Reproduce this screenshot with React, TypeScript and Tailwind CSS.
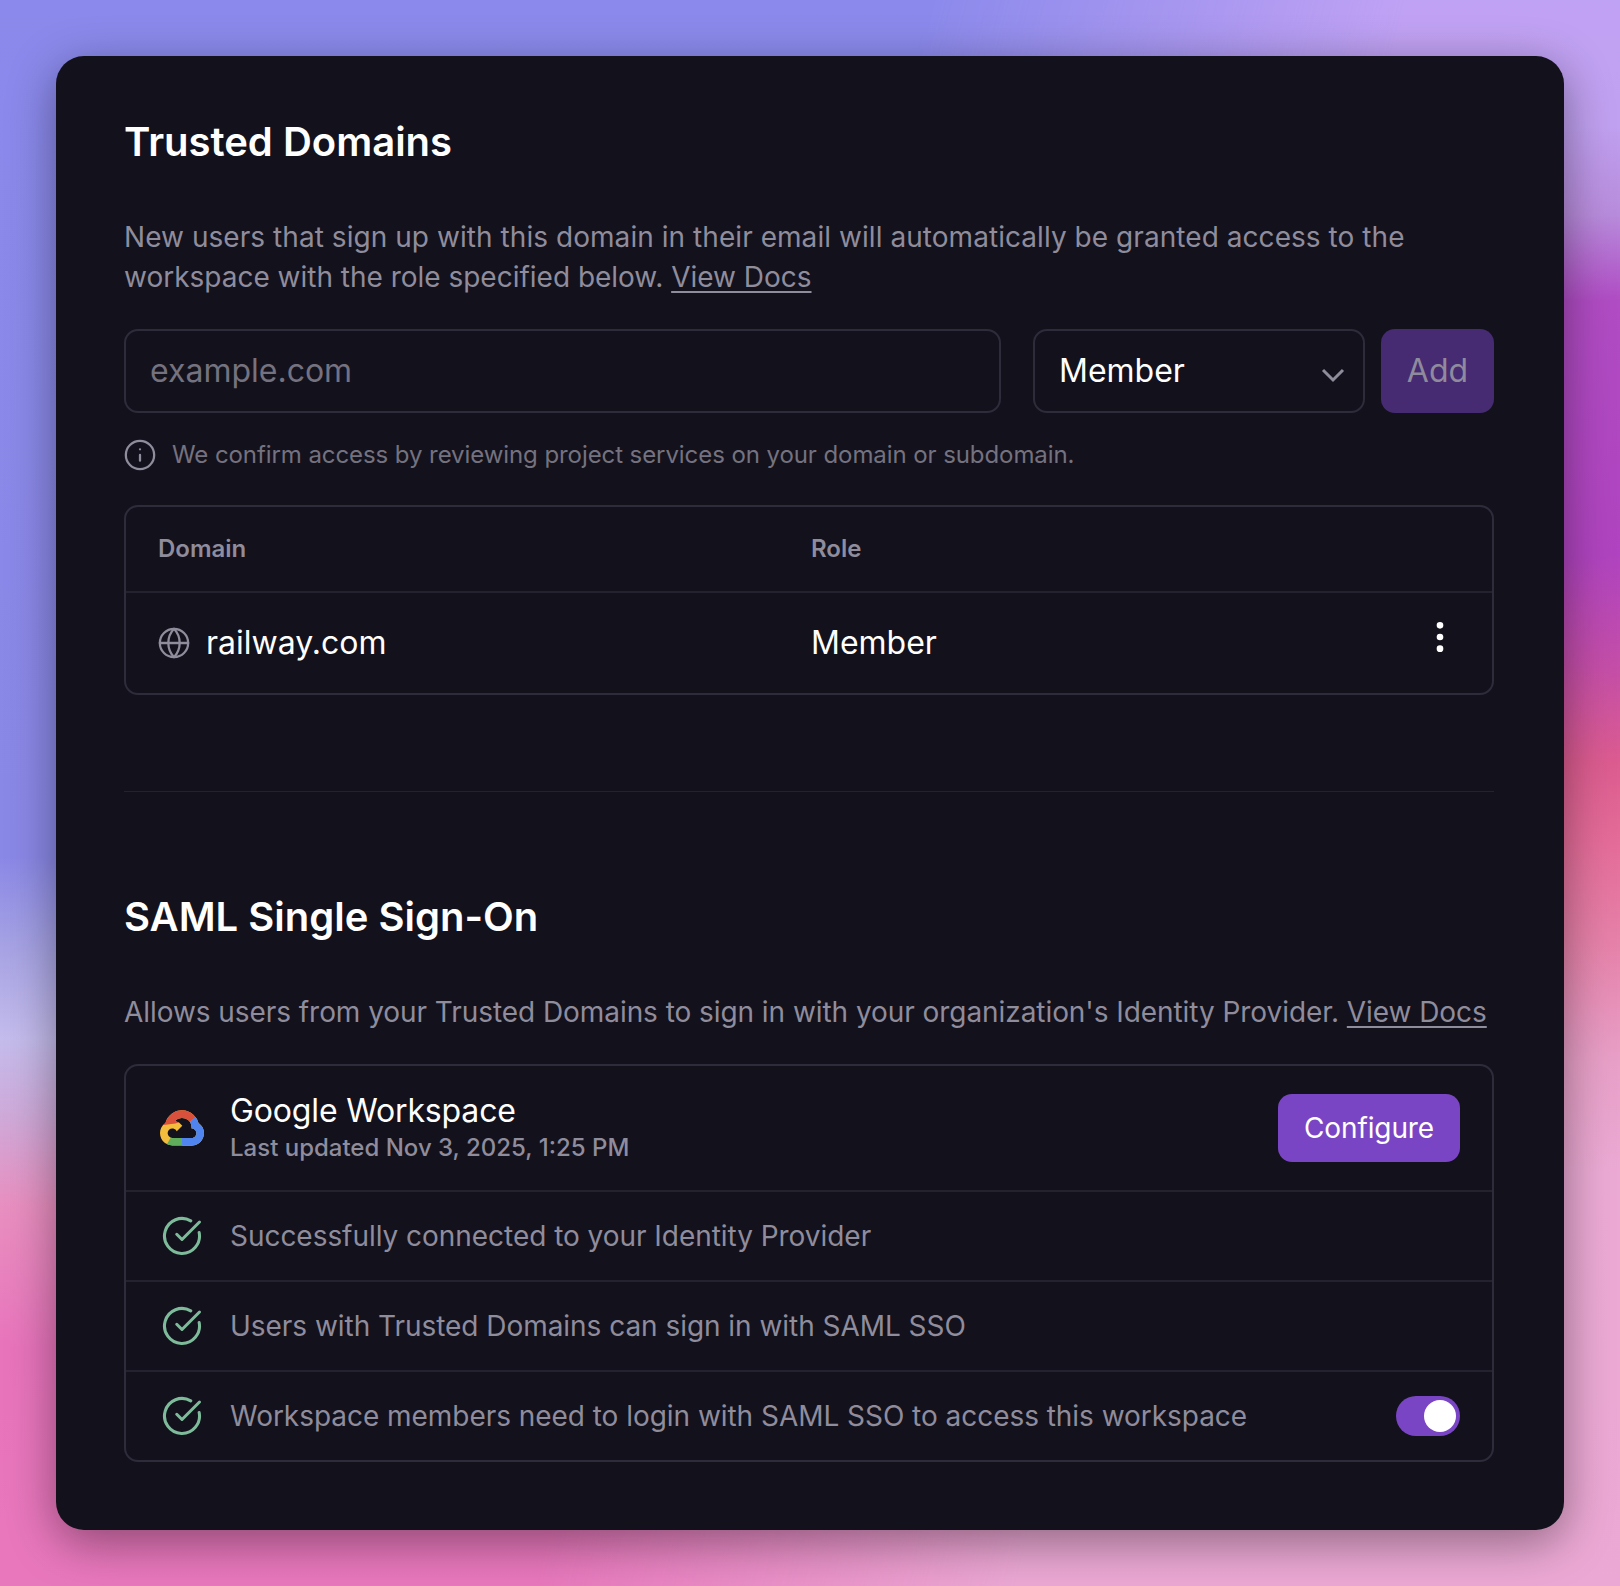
import { CircleCheckBig, EllipsisVertical, Globe, Info } from "lucide-react";

const checks = [
  "Successfully connected to your Identity Provider",
  "Users with Trusted Domains can sign in with SAML SSO",
  "Workspace members need to login with SAML SSO to access this workspace",
];

const GoogleCloud = () => (
  <svg width="44" height="44" viewBox="0 0 24 24" className="shrink-0">
    <defs>
      <clipPath id="cloud">
        <path
          clipRule="evenodd"
          d="M12.19 2.38a9.344 9.344 0 0 0-9.234 6.893c.053-.02-.055.013 0 0-3.875 2.551-3.922 8.11-.247 10.941l.006-.007-.007.03a6.717 6.717 0 0 0 4.077 1.356h5.173l.03.03h5.192c6.687.053 9.376-8.605 3.835-12.35a9.365 9.365 0 0 0-2.821-4.552l-.043.043.006-.05A9.344 9.344 0 0 0 12.19 2.38zm-.358 4.146c1.244-.04 2.518.368 3.486 1.15a5.186 5.186 0 0 1 1.862 4.078v.518c3.53-.07 3.53 5.262 0 5.193h-5.193l-.008.009v-.04H6.785a2.59 2.59 0 0 1-1.067-.23h.001a2.597 2.597 0 1 1 3.437-3.437l3.013-3.012A6.747 6.747 0 0 0 8.11 8.24c.018-.01.04-.026.054-.023a5.186 5.186 0 0 1 3.67-1.69z"
        />
      </clipPath>
    </defs>
    <g clipPath="url(#cloud)">
      <rect x="0" y="0" width="24" height="24" fill="#f2bd3c" />
      <polygon points="12,16 24,16 24,24 12,24" fill="#5085f0" />
      <polygon points="16,9 19.5,5 24,8 24,17 12,17 12,15 18,15" fill="#5085f0" />
      <polygon points="0,0 24,0 19.8,5.2 16,9 13,8 8.4,9.5 2,10.4" fill="#d9503c" />
      <polygon points="5.6,17.6 12,17.2 12.05,24 2,24" fill="#5fad5c" />
    </g>
  </svg>
);

export default function App() {
  return (
    <div className="relative min-h-[1586px] p-[56px] font-['Inter',sans-serif] bg-[linear-gradient(180deg,#8b8aec_0%,#8a88e6_54%,#a8a4e4_60%,#c4bcec_65.5%,#cfa9d8_70.5%,#e88fc0_76%,#e874bc_85%,#e878bc_100%)] before:absolute before:inset-0 before:content-[''] before:bg-[linear-gradient(180deg,#c0a2f4_0%,#c0a0f0_8%,#b88cdc_13.5%,#b04cc4_19%,#b044c0_35%,#c44ea8_42%,#dc5c90_48%,#e46c98_53%,#e680a8_59%,#e8a0c8_67%,#ebaad4_74%,#eba8d4_100%)] before:[mask-image:linear-gradient(104deg,transparent_46%,black_70%)]">
      <div className="relative rounded-[28px] bg-[#13111c] pb-[68px] pl-[68px] pr-[70px] pt-[68px] shadow-[0_12px_48px_rgba(0,0,0,0.4)]">
        <h2 className="text-[40px] leading-[36px] font-semibold text-white">Trusted Domains</h2>
        <p className="mt-[57px] text-[28px] leading-[40px] text-[#8f8c9c]">
          <span className="block tracking-[0.054px]">New users that sign up with this domain in their email will automatically be granted access to the</span>
          <span className="block tracking-[-0.01px]">
            workspace with the role specified below. <a className="underline underline-offset-[4px]">View Docs</a>
          </span>
        </p>

        <div className="mt-[32px] flex h-[84px]">
          <input
            placeholder="example.com"
            className="w-[877px] rounded-[14px] border-2 border-[#2e2c3a] bg-transparent px-[24px] text-[32px] text-white outline-none placeholder:text-[#75727f]"
          />
          <div className="ml-[32px] flex w-[332px] items-center justify-between rounded-[14px] border-2 border-[#2e2c3a] pl-[24px] pr-[18px] text-[32px] text-white">
            Member
            <svg width="24" height="16" viewBox="0 0 24 16" fill="none" className="mt-[8px]">
              <path d="M2 3l10 10L22 3" stroke="#8f8c9c" strokeWidth="3" />
            </svg>
          </div>
          <button className="ml-[16px] w-[113px] rounded-[14px] bg-[#462b72] text-[32px] text-[#8f8a9c]">Add</button>
        </div>

        <div className="mt-[27px] flex h-[30px] items-center gap-[15px] text-[24px] tracking-[-0.08px] text-[#75727f]">
          <Info size={34} strokeWidth={1.6} className="-ml-[1px] shrink-0 text-[#8f8c9c]" />
          We confirm access by reviewing project services on your domain or subdomain.
        </div>

        <div className="mt-[35px] rounded-[14px] border-2 border-[#2e2c3a]">
          <div className="flex h-[86px] items-center border-b-2 border-[#24222e] px-[32px] text-[24px] font-semibold text-[#8f8c9c]">
            <div className="w-[653px]">Domain</div>
            <div>Role</div>
          </div>
          <div className="flex h-[100px] items-center pl-[32px] pr-[32px] text-[32px] text-white">
            <div className="flex w-[653px] items-center gap-[15px]">
              <Globe size={34} strokeWidth={1.6} className="-ml-[1px] shrink-0 text-[#8f8c9c]" />
              railway.com
            </div>
            <div>Member</div>
            <EllipsisVertical size={40} className="mb-[12px] ml-auto" />
          </div>
        </div>

        <div className="mt-[96px] h-px bg-[#24222e]" />

        <h2 className="mt-[107px] text-[40px] leading-[36px] font-semibold text-white">SAML Single Sign-On</h2>
        <p className="mt-[57px] text-[28px] leading-[40px] tracking-[-0.06px] text-[#8f8c9c]">
          Allows users from your Trusted Domains to sign in with your organization's Identity Provider.{" "}
          <a className="underline underline-offset-[4px]">View Docs</a>
        </p>

        <div className="mt-[32px] rounded-[14px] border-2 border-[#2e2c3a]">
          <div className="flex h-[126px] items-center border-b-2 border-[#24222e] pl-[34px] pr-[32px]">
            <GoogleCloud />
            <div className="ml-[26px]">
              <div className="text-[32px] leading-[40px] tracking-[-0.15px] text-white">Google Workspace</div>
              <div className="text-[24px] leading-[34px] font-medium text-[#8f8c9c]">Last updated Nov 3, 2025, 1:25 PM</div>
            </div>
            <button className="ml-auto h-[68px] w-[182px] rounded-[14px] bg-[#7a45c4] text-[28px] tracking-[-0.1px] text-white">Configure</button>
          </div>
          {checks.map((text, i) => (
            <div
              key={text}
              className={
                i < 2
                  ? "flex h-[90px] items-center border-b-2 border-[#24222e] pl-[35px] pr-[32px] text-[28px] tracking-[-0.04px] text-[#8f8c9c]"
                  : "flex h-[88px] items-center pl-[35px] pr-[32px] text-[28px] tracking-[-0.04px] text-[#8f8c9c]"
              }
            >
              <CircleCheckBig size={42} strokeWidth={1.75} className="shrink-0 text-[#7dbb9a]" />
              <span className="ml-[27px]">{text}</span>
              {i === 2 && (
                <div className="ml-auto flex h-[40px] w-[64px] items-center justify-end rounded-full bg-[#7a45c4] pr-[4px]">
                  <div className="h-[32px] w-[32px] rounded-full bg-white" />
                </div>
              )}
            </div>
          ))}
        </div>
      </div>
    </div>
  );
}
